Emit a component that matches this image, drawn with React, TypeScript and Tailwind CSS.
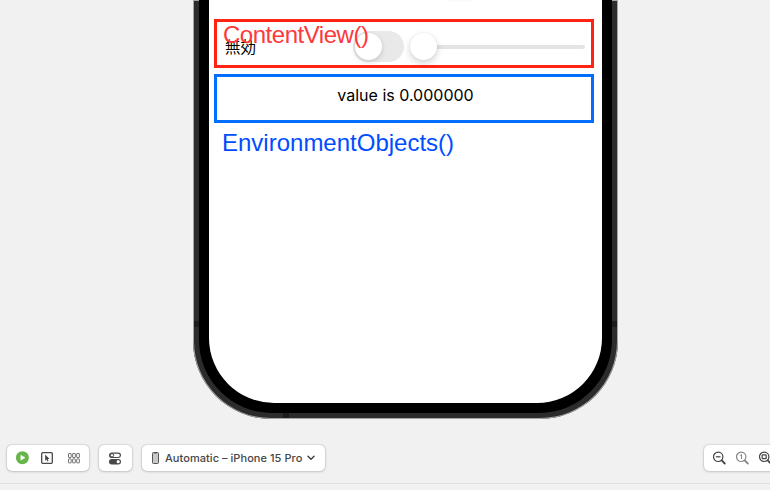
import React from "react";

function PlayIcon() {
  return (
    <svg width="14" height="14" viewBox="0 0 14 14">
      <circle cx="7.4" cy="6.7" r="6.5" fill="#65b54a" />
      <path d="M5.8 4.2v5l4.2-2.5z" fill="#fff" stroke="#fff" strokeWidth=".5" strokeLinejoin="round" />
    </svg>
  );
}

function SelectIcon() {
  return (
    <svg width="12" height="12" viewBox="0 0 12 12">
      <rect x=".7" y=".7" width="10.6" height="10.6" rx="1" fill="none" stroke="#484848" strokeWidth="1.3" />
      <path d="M4.2 2.4v6.3l1.4-1.3.9 2.1 1-.4-.9-2.1h1.9z" fill="#404040" />
    </svg>
  );
}

function GridIcon() {
  return (
    <svg width="12" height="11" viewBox="0 0 12 11" fill="none" stroke="#666" strokeWidth=".9">
      {[0.5, 4.6, 8.7].map((x) =>
        [0.5, 5.9].map((y) => <rect key={`${x}-${y}`} x={x} y={y} width="2.7" height="4" rx=".4" />)
      )}
    </svg>
  );
}

function TogglesIcon() {
  return (
    <svg width="12" height="13" viewBox="0 0 12 13">
      <rect x=".6" y="1.1" width="10.8" height="4.4" rx="2.2" fill="none" stroke="#484848" strokeWidth="1.2" />
      <circle cx="3" cy="3.3" r="1.7" fill="none" stroke="#484848" strokeWidth="1" />
      <rect x="0" y="7" width="12" height="5.4" rx="2.7" fill="#484848" />
      <circle cx="9.2" cy="9.7" r="1.6" fill="#fff" />
    </svg>
  );
}

function PhoneIcon() {
  return (
    <svg width="7" height="12" viewBox="0 0 7 12">
      <rect x=".5" y=".5" width="6" height="11" rx=".9" fill="#c9c9c9" stroke="#555" />
      <path d="M2.3 1.2h2.4" stroke="#555" strokeWidth=".9" />
    </svg>
  );
}

function Magnifier({ color, children }: { color: string; children: React.ReactNode }) {
  return (
    <svg className="shrink-0" width="14" height="14" viewBox="0 0 14 14" fill="none" stroke={color} strokeWidth="1.2">
      <circle cx="5.2" cy="5.8" r="4.7" />
      <path d="M8.7 9.4l3.1 3.1" strokeWidth="1.8" strokeLinecap="round" />
      {children}
    </svg>
  );
}

const pill =
  "flex h-[26px] shrink-0 items-center rounded-[5px] bg-white shadow-[0_0_2px_rgba(0,0,0,0.28),0_1px_3px_rgba(0,0,0,0.12)]";

export default function App() {
  return (
    <div className="flex h-[490px] w-[770px] flex-col overflow-hidden bg-[#f1f1f1] font-['Inter',sans-serif]">
      <div className="relative ml-[193px] h-[419px] w-[425px] rounded-b-[78px] bg-[#2c2c2c] px-[6px] pb-[6px] shadow-[inset_0_0_0_1px_#a5a5a5]">
        <div className="absolute top-[321px] left-px h-[6px] w-[5px] bg-[#1c1c1c]" />
        <div className="absolute top-[321px] right-px h-[6px] w-[5px] bg-[#1c1c1c]" />
        <div className="absolute bottom-px left-[90px] h-[5px] w-[6px] bg-[#1c1c1c]" />
        <div className="h-full rounded-b-[73px] bg-black px-[10px] pb-[10px]">
          <main className="relative flex h-full flex-col gap-[6px] overflow-hidden rounded-b-[65px] bg-white pt-[19px] pr-[8px] pl-[5px]">
            <div className="absolute -top-[7px] left-[236px] h-[4px] w-[30px] rounded-full shadow-[0_1px_5px_rgba(0,0,0,0.12)]" />
            <section className="relative flex h-[49px] shrink-0 items-center border-[3px] border-[#ff2412] pt-[5px] pr-[6px] pl-[8px]">
              <span className="w-[128px] shrink-0 font-['Noto_Sans_CJK_JP',sans-serif] text-[15.5px] leading-[24px] text-black">無効</span>
              <div className="flex h-[31px] w-[51px] shrink-0 items-center rounded-full bg-[#e9e9ea] pl-[2px]">
                <div className="h-[27px] w-[27px] rounded-full bg-white shadow-[0_2px_5px_rgba(0,0,0,0.16)]" />
              </div>
              <div className="ml-[6px] flex flex-1 items-center">
                <div className="z-10 h-[27px] w-[27px] shrink-0 rounded-full bg-white shadow-[0_3px_7px_rgba(0,0,0,0.18),0_0_2px_rgba(0,0,0,0.08)]" />
                <div className="-ml-[2px] mt-[2px] h-[4px] flex-1 rounded-full bg-[#e4e4e5]" />
              </div>
              <span className="absolute top-[-1px] left-[6px] font-['Liberation_Sans',sans-serif] text-[24px] leading-[28px] tracking-[-0.47px] whitespace-nowrap text-[#ff383c]">ContentView()</span>
            </section>
            <section className="flex h-[49px] shrink-0 justify-center border-[3px] border-[#006eff] pt-[6px] pl-[3px]">
              <span className="text-[16px] leading-[24px] whitespace-nowrap text-black">value is 0.000000</span>
            </section>
            <span className="pl-[8px] font-['Liberation_Sans',sans-serif] text-[24px] leading-[28px] whitespace-nowrap text-[#004dff]">EnvironmentObjects()</span>
          </main>
        </div>
      </div>
      <div className="flex h-[65px] shrink-0 items-start border-b border-[#dfdfdf] pt-[26px] pl-[7px]">
        <div className={`${pill} w-[82px] pl-[8px]`}>
          <PlayIcon />
          <span className="ml-[12px]"><SelectIcon /></span>
          <span className="ml-[15px]"><GridIcon /></span>
        </div>
        <div className={`${pill} ml-[10px] w-[33px] pl-[10px]`}>
          <TogglesIcon />
        </div>
        <div className={`${pill} ml-[10px] w-[183px] pl-[10px]`}>
          <PhoneIcon />
          <span className="ml-[6px] text-[11px] leading-[14px] font-medium tracking-[0.05px] whitespace-nowrap text-[#464646]">Automatic – iPhone 15 Pro</span>
          <svg className="ml-[5px]" width="8" height="6" viewBox="0 0 8 6" fill="none" stroke="#444" strokeWidth="1.5" strokeLinecap="round" strokeLinejoin="round">
            <path d="M1 1.2l3 3 3-3" />
          </svg>
        </div>
        <div className={`${pill} ml-[379px] w-[92px] gap-[9px] pl-[9px]`}>
          <Magnifier color="#444"><path d="M2.9 5.8h4.6" /></Magnifier>
          <Magnifier color="#858585"><path d="M4.2 4.5l1.3-.9v4.4" strokeWidth="1" /></Magnifier>
          <Magnifier color="#444"><rect x="3.2" y="3.9" width="4" height="3.8" rx=".6" /></Magnifier>
        </div>
      </div>
    </div>
  );
}
